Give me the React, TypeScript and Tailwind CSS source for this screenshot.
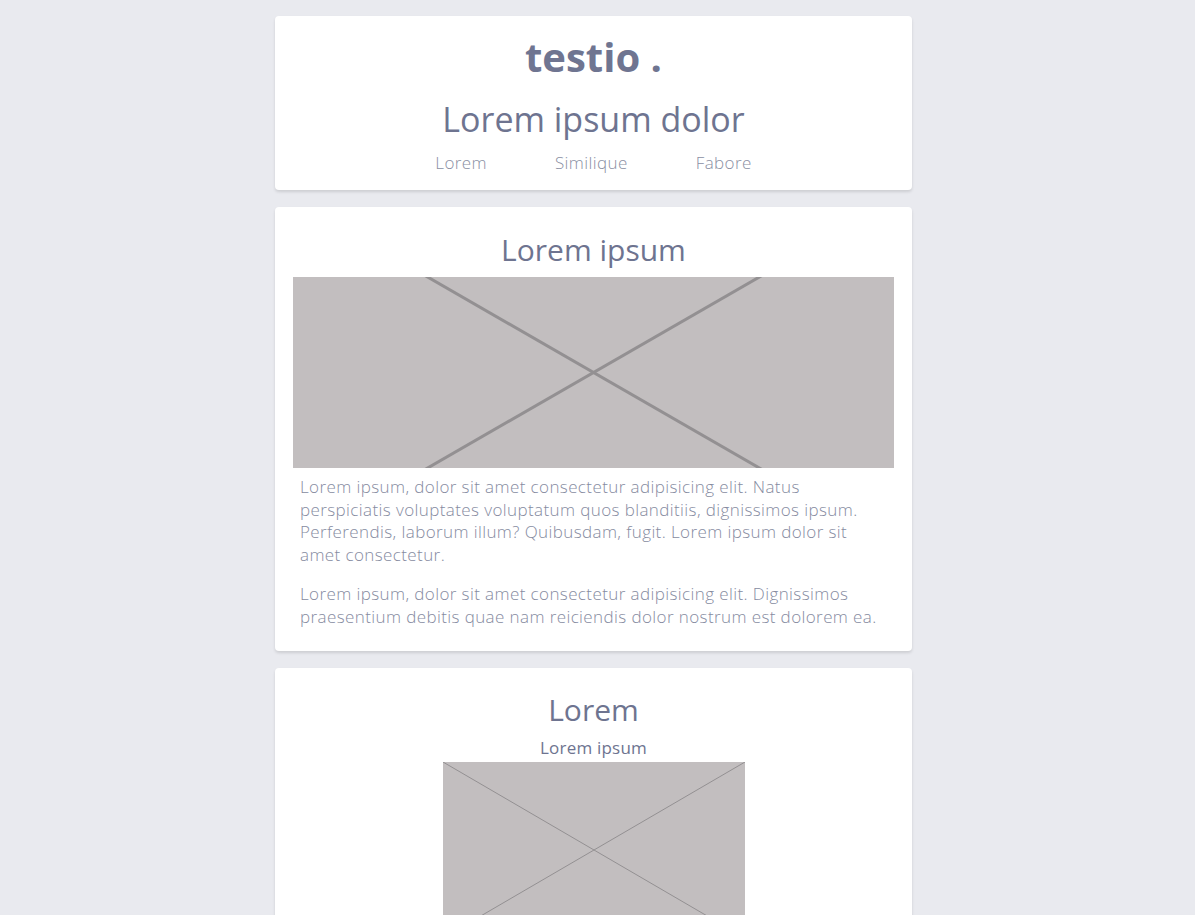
import React from "react";

const font = { fontFamily: "'Open Sans', 'Liberation Sans', sans-serif" };

function Placeholder({ w, h, full, stroke }: { w: number; h: number; full: number; stroke: number }) {
  // placeholder picture: an X drawn corner to corner, cropped like object-cover
  const off = (full - h) / 2;
  return (
    <svg width={w} height={h} viewBox={`0 ${off} ${w} ${h}`} className="block bg-[#c2bebf]">
      <line x1="0" y1="0" x2={w} y2={full} stroke="#939092" strokeWidth={stroke} />
      <line x1={w} y1="0" x2="0" y2={full} stroke="#939092" strokeWidth={stroke} />
    </svg>
  );
}

export default function App() {
  return (
    <div className="min-h-screen bg-[#e9eaef] pr-[8px] pt-4 pb-10" style={font}>
      <div className="mx-auto flex w-[637px] flex-col gap-[17px] text-[#6e7490]">
        {/* Header card */}
        <header className="rounded bg-white pt-[14px] pb-[16px] text-center shadow-[0_2px_3px_rgba(0,0,0,0.12)]">
          <h1 className="text-[40px] font-bold leading-[54px] text-[#6f7591]">testio .</h1>
          <h2 className="mt-[14px] text-[34px] font-normal leading-[42px]">Lorem ipsum dolor</h2>
          <nav className="mt-[12px] flex justify-center gap-[68px] text-[17px] font-light leading-[22px] tracking-[0.4px] text-[#8a8fa3]">
            <a>Lorem</a>
            <a>Similique</a>
            <a>Fabore</a>
          </nav>
        </header>

        {/* Article card */}
        <section className="rounded bg-white px-[18px] pt-[24px] pb-[22px] shadow-[0_2px_3px_rgba(0,0,0,0.12)]">
          <h2 className="text-center text-[30px] font-normal leading-[38px]">Lorem ipsum</h2>
          <div className="mt-[8px]">
            <Placeholder w={601} h={191} full={346} stroke={3} />
          </div>
          <div className="px-[7px] pt-[8px] text-[17px] font-light leading-[22.6px] tracking-[0.4px] text-[#868b9f]">
            <p>
              Lorem ipsum, dolor sit amet consectetur adipisicing elit. Natus perspiciatis voluptates voluptatum quos
              blanditiis, dignissimos ipsum. Perferendis, laborum illum? Quibusdam, fugit. Lorem ipsum dolor sit amet
              consectetur.
            </p>
            <p className="mt-[17px]">
              Lorem ipsum, dolor sit amet consectetur adipisicing elit. Dignissimos praesentium debitis quae nam
              reiciendis dolor nostrum est dolorem ea.
            </p>
          </div>
        </section>

        {/* Gallery card */}
        <section className="rounded bg-white px-[18px] pt-[23px] pb-[24px] shadow-[0_2px_3px_rgba(0,0,0,0.12)]">
          <h2 className="text-center text-[30px] font-normal leading-[38px]">Lorem</h2>
          <h3 className="mt-[8px] text-center text-[17px] font-medium leading-[22px] tracking-[0.2px]">Lorem ipsum</h3>
          <div className="mt-[3px] flex justify-center">
            <Placeholder w={302} h={176} full={176} stroke={1} />
          </div>
        </section>
      </div>
    </div>
  );
}
